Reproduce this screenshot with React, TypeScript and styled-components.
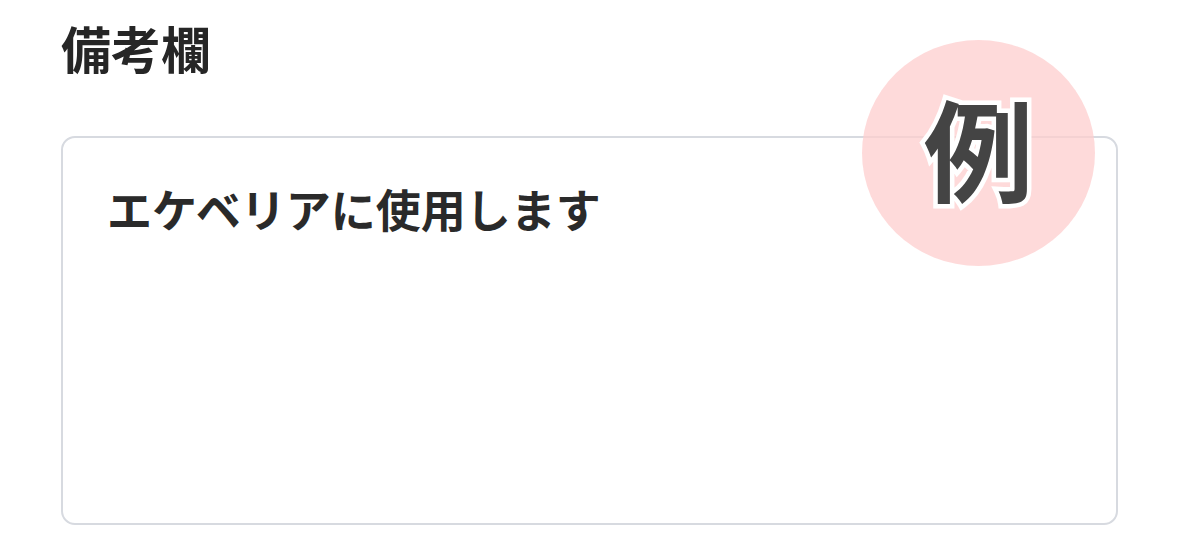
import React from "react";
import styled, { createGlobalStyle } from "styled-components";

const Global = createGlobalStyle`
  html, body { margin: 0; padding: 0; background: #ffffff; }
  body { font-family: "Noto Sans CJK JP", "Noto Sans", sans-serif; color: #262626; }
`;

const Page = styled.div`
  width: 1179px;
  height: 552px;
  box-sizing: border-box;
  padding: 18px 61px 0 61px;
  overflow: hidden;
`;

const Title = styled.h1`
  margin: 0;
  font-size: 50px;
  line-height: 58px;
  font-weight: 700;
  color: #262626;
`;

const Field = styled.div`
  position: relative;
  margin-top: 60px;
  width: 1057px;
  height: 389px;
  box-sizing: border-box;
  border: 2px solid #d7dae0;
  border-radius: 14px;
  padding: 41px 44px;
`;

const Note = styled.p`
  margin: 0;
  font-size: 45px;
  line-height: 60px;
  font-weight: 700;
  color: #2a2a2a;
`;

const Badge = styled.div`
  position: absolute;
  left: 799px;
  top: -98px;
  width: 233px;
  height: 226px;
  border-radius: 50%;
  background: rgba(253, 205, 205, 0.75);
  display: flex;
  align-items: center;
  justify-content: center;
`;

const BadgeText = styled.span`
  font-size: 110px;
  line-height: 1;
  font-weight: 700;
  color: #444444;
  -webkit-text-stroke: 9px #ffffff;
  paint-order: stroke fill;
  margin-top: -14px;
`;

export default function App() {
  return (
    <>
      <Global />
      <Page>
        <Title>備考欄</Title>
        <Field>
          <Note>エケベリアに使用します</Note>
          <Badge>
            <BadgeText>例</BadgeText>
          </Badge>
        </Field>
      </Page>
    </>
  );
}
